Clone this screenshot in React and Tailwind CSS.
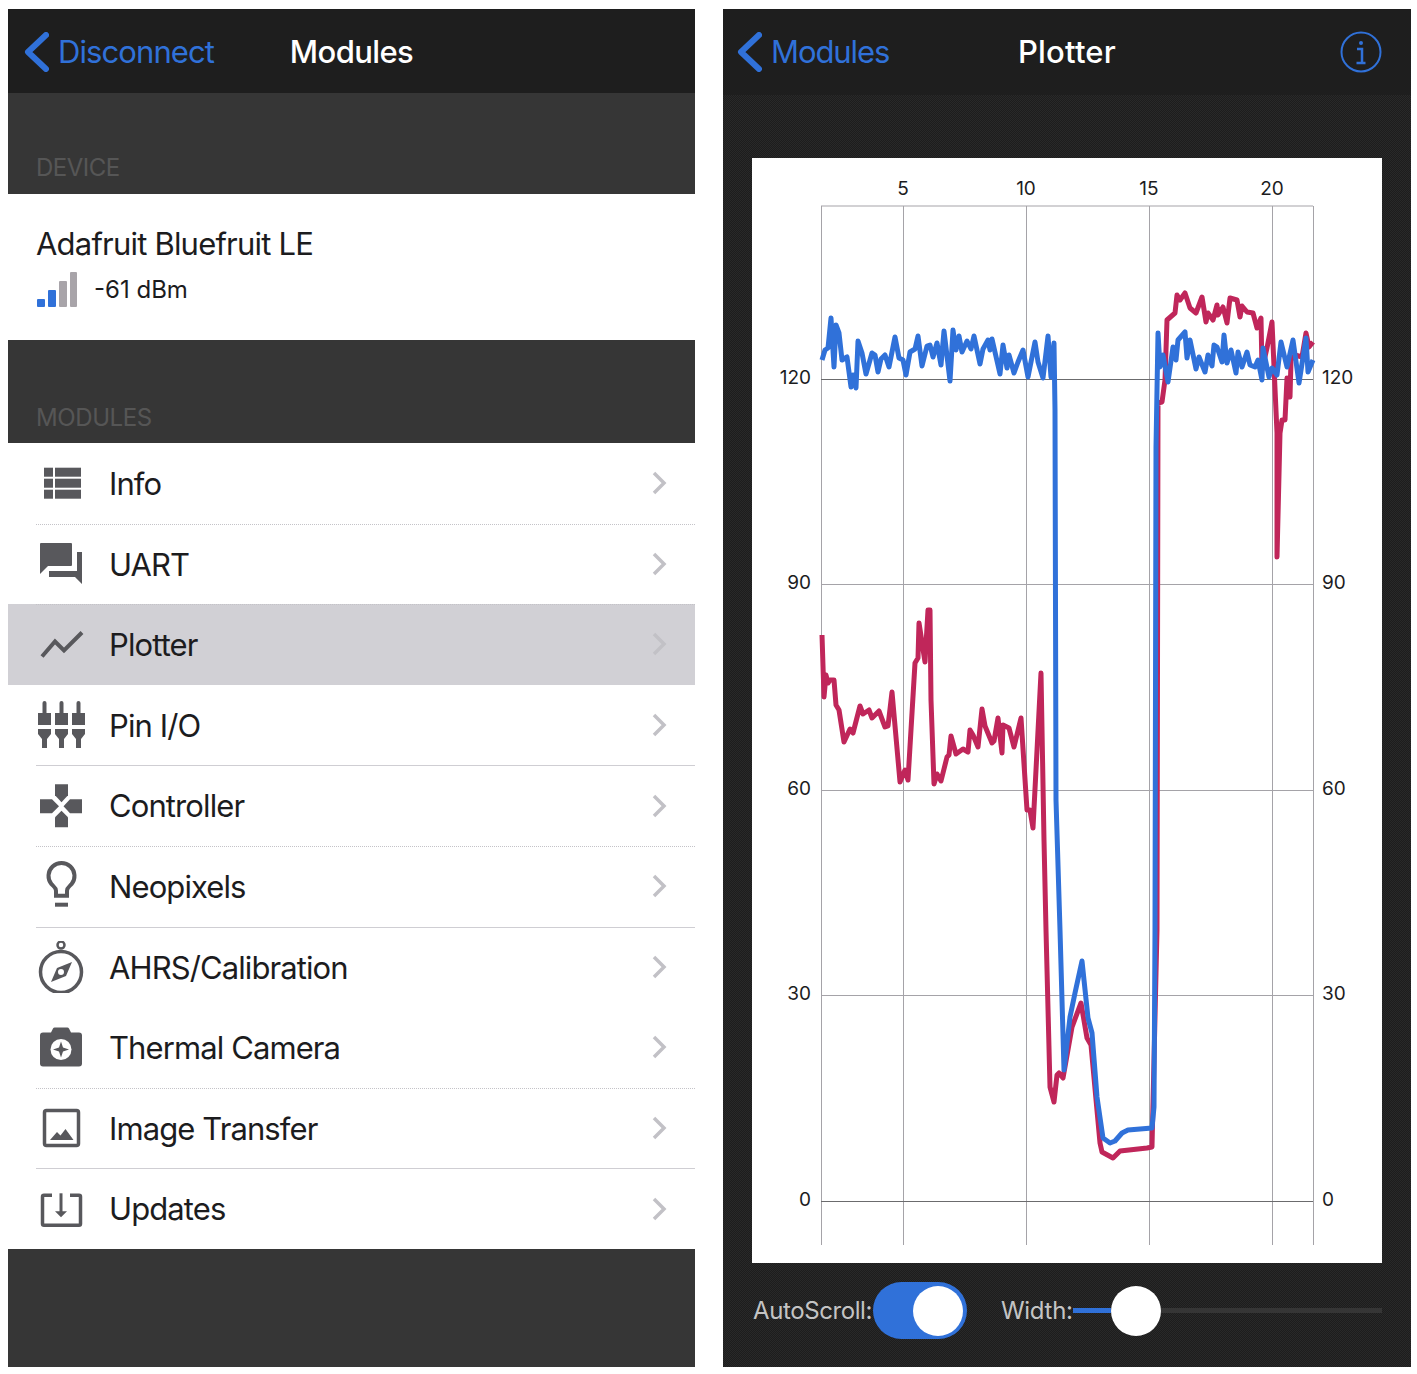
// libs

const BLUE = "#3071d9";
const RED = "#c0265a";

// chart series, in page coordinates (viewBox of the chart matches the page)
const redLine = "822,635 824,697 826,675 828,683 830,680 834,680 836,705 839,710 844,742 850,729 853,733 860,706 863,714 869,710 872,718 879,711 885,727 888,726 892,692 900,782 905,770 908,780 915,663 918,658 919,623 925,662 928,610 930,610 931,700 934,784 937,774 941,781 947,757 949,755 951,736 956,754 963,749 968,752 970,730 973,735 978,747 982,709 985,726 992,743 994,741 998,718 1002,753 1003,725 1009,728 1014,747 1021,718 1027,810 1030,810 1033,828 1041,673 1044,840 1046,930 1050,1087 1054,1102 1057,1075 1059,1073 1063,1078 1072,1027 1081,1003 1087,1038 1091,1045 1100,1143 1102,1152 1113,1158 1120,1151 1147,1148 1152,1147 1157,930 1158,403 1162,402 1165,380 1167,320 1175,313 1177,295 1180,300 1185,293 1190,308 1196,313 1202,297 1206,322 1208,313 1213,320 1217,305 1218,315 1223,307 1227,323 1230,298 1237,300 1240,317 1242,306 1247,312 1253,313 1257,328 1261,318 1262,370 1267,348 1272,322 1277,433 1277,557 1280,433 1282,420 1285,420 1287,378 1290,397 1291,360 1295,355 1302,357 1306,333 1309,347 1313,342";
const blueLine = "822,360 825,350 828,348 831,318 834,367 836,325 839,333 842,360 847,357 851,387 853,375 856,388 858,341 862,353 866,374 872,353 875,355 878,372 881,359 885,355 889,367 895,337 899,358 903,360 906,375 910,352 915,349 918,336 922,366 927,346 930,345 933,357 937,343 941,365 944,331 950,381 953,330 956,350 959,336 962,352 967,341 971,349 974,336 980,364 983,349 988,340 990,350 992,339 1000,374 1003,345 1007,368 1009,355 1014,373 1018,362 1023,350 1028,377 1035,342 1038,362 1043,378 1048,336 1051,377 1054,343 1055,410 1056,800 1060,930 1064,1070 1070,1017 1075,993 1082,961 1088,1018 1092,1033 1097,1097 1103,1138 1110,1143 1115,1141 1122,1133 1128,1130 1152,1128 1154,1107 1155,930 1156,447 1158,333 1160,367 1163,355 1168,382 1173,347 1176,360 1178,340 1185,332 1187,358 1190,340 1196,369 1199,357 1205,372 1208,355 1212,366 1214,345 1217,347 1222,362 1224,335 1227,363 1231,350 1236,373 1238,352 1242,367 1247,352 1250,365 1255,367 1258,360 1262,380 1263,348 1269,377 1272,368 1277,375 1281,342 1287,367 1293,340 1299,383 1306,338 1308,372 1313,360";

const yLabels = [
    { y: 379, label: "120" },
    { y: 584, label: "90" },
    { y: 790, label: "60" },
    { y: 995, label: "30" },
    { y: 1201, label: "0" },
];
const xLabels = [
    { x: 903, label: "5" },
    { x: 1026, label: "10" },
    { x: 1149, label: "15" },
    { x: 1272, label: "20" },
];

// icons: each viewBox is a 52x52 window over the page position of the icon
function InfoIcon() {
    return (
        <svg viewBox="35 457.3 52 52" className="w-[52px] h-[52px]" fill="#58585c">
            <rect x="44" y="468" width="9" height="9" />
            <rect x="55" y="468" width="26" height="9" />
            <rect x="44" y="479" width="9" height="9" />
            <rect x="55" y="479" width="26" height="9" />
            <rect x="44" y="490" width="9" height="9" />
            <rect x="55" y="490" width="26" height="9" />
        </svg>
    );
}
function UartIcon() {
    return (
        <svg viewBox="35 537.9 52 52" className="w-[52px] h-[52px]" fill="#58585c">
            <path d="M41 543h30a1 1 0 0 1 1 1v21a1 1 0 0 1-1 1H48l-8 8V544a1 1 0 0 1 1-1z" />
            <path d="M77 552h5v32l-7-7H49v-6h28z" />
        </svg>
    );
}
function PlotterIcon() {
    return (
        <svg viewBox="35 618.5 52 52" className="w-[52px] h-[52px]" fill="none" stroke="#58585c" strokeWidth="4">
            <polyline points="42,657 55,642 64,651 82,633" />
        </svg>
    );
}
function PinIcon() {
    return (
        <svg viewBox="35 699 52 52" className="w-[52px] h-[52px]" fill="#58585c">
            {[38, 55, 72].map((x) => (
                <g key={x}>
                    <path d={`M${x + 4.5} 703a2 2 0 0 1 4 0v10h4.500v12h-13v-12h4.500z`} />
                    <path d={`M${x} 729h13v5l-4 5v9h-5v-9l-4-5z`} />
                </g>
            ))}
        </svg>
    );
}
function ControllerIcon() {
    return (
        <svg viewBox="35 779.7 52 52" className="w-[52px] h-[52px]" fill="#58585c">
            <path d="M55 784h13v11l-6.500 7-6.500-7z" />
            <path d="M55 827h13v-10l-6.500-6.500-6.500 6.500z" />
            <path d="M40 799h12l7 7-7 7H40z" />
            <path d="M82 799H70l-6.500 7 6.500 7h12z" />
        </svg>
    );
}
function BulbIcon() {
    return (
        <svg viewBox="35 860.3 52 52" className="w-[52px] h-[52px]" fill="none" stroke="#58585c" strokeWidth="4">
            <path d="M56 896v-5c0-3-2-4-4.500-6.500a13 13 0 1 1 20 0C69 887 67 888 67 891v5z" />
            <line x1="55" y1="905" x2="68" y2="905" />
        </svg>
    );
}
function CompassIcon() {
    return (
        <svg viewBox="35 940.900 52 52" className="w-[52px] h-[52px]" fill="none" stroke="#58585c">
            <circle cx="61" cy="972" r="20.500" strokeWidth="3.500" />
            <circle cx="61" cy="945" r="3.500" strokeWidth="2.500" />
            <path fillRule="evenodd" fill="#58585c" stroke="none" d="M72 962l-6 14-15 6 6-14zM61 969a3 3 0 1 0 0 6 3 3 0 0 0 0-6z" />
        </svg>
    );
}
function CameraIcon() {
    return (
        <svg viewBox="35 1021.500 52 52" className="w-[52px] h-[52px]">
            <path fill="#58585c" d="M43 1033h8l2-4a2 2 0 0 1 2-1h12a2 2 0 0 1 2 1l2 4h8a3 3 0 0 1 3 3v28a3 3 0 0 1-3 3H43a3 3 0 0 1-3-3v-28a3 3 0 0 1 3-3z" />
            <circle cx="61" cy="1050" r="10.500" fill="#fff" />
            <path fill="#58585c" d="M61 1042l2 6 6 2-6 2-2 6-2-6-6-2 6-2z" />
        </svg>
    );
}
function ImageIcon() {
    return (
        <svg viewBox="35 1102 52 52" className="w-[52px] h-[52px]">
            <rect x="44.500" y="1110.500" width="34" height="35" rx="2" fill="none" stroke="#58585c" strokeWidth="3.500" />
            <path fill="#58585c" d="M50 1140l7-8 3.500 3.500 5-6.500 8 11z" />
        </svg>
    );
}
function UpdatesIcon() {
    return (
        <svg viewBox="35 1182.700 52 52" className="w-[52px] h-[52px]" fill="none" stroke="#58585c" strokeWidth="3.500">
            <path d="M52 1195H44a1.500 1.500 0 0 0-1.500 1.500v27a1.500 1.500 0 0 0 1.500 1.500h35a1.500 1.500 0 0 0 1.500-1.500v-27a1.500 1.500 0 0 0-1.500-1.500h-9" />
            <line x1="61" y1="1193" x2="61" y2="1212" strokeWidth="3" />
            <path d="M55 1211h12l-6 6z" fill="#58585c" stroke="none" />
        </svg>
    );
}

const modules = [
    { name: "Info", Icon: InfoIcon, divider: "dotted" },
    { name: "UART", Icon: UartIcon, divider: "dotted" },
    { name: "Plotter", Icon: PlotterIcon, active: true },
    { name: "Pin I/O", Icon: PinIcon, divider: "solid" },
    { name: "Controller", Icon: ControllerIcon, divider: "dotted" },
    { name: "Neopixels", Icon: BulbIcon, divider: "solid" },
    { name: "AHRS/Calibration", Icon: CompassIcon },
    { name: "Thermal Camera", Icon: CameraIcon, divider: "dotted" },
    { name: "Image Transfer", Icon: ImageIcon, divider: "solid" },
    { name: "Updates", Icon: UpdatesIcon },
];

function BackLink({ label, className }) {
    return (
        <div className={`flex items-center text-[#3071d9] text-[31px] ${className}`}>
            <svg viewBox="0 0 26 40" className="w-[26px] h-[40px] ml-[15px] mr-[9px]" fill="none" stroke={BLUE} strokeWidth="6" strokeLinecap="round" strokeLinejoin="round">
                <polyline points="23,3 5,20 23,37" />
            </svg>
            <span>{label}</span>
        </div>
    );
}

function ModuleRow({ name, Icon, active, divider }) {
    return (
        <div className={`flex-1 flex items-center pl-[27px] relative ${active ? "bg-[#d1d0d5]" : "bg-white"}`}>
            <Icon />
            <span className="ml-[22px] pt-[2px] flex-1 text-[#1c1c1e] text-[31px] tracking-[-0.9px]">{name}</span>
            <svg viewBox="0 0 16 24" className="w-[16px] h-[24px] mr-[28px]" fill="none" stroke="#c2c1c6" strokeWidth="3.500">
                <polyline points="3,2 13,12 3,22" />
            </svg>
            {divider === "solid" && <div className="absolute z-10 left-[28px] right-0 -bottom-px h-px bg-[#cfced3]"></div>}
            {divider === "dotted" && <div className="absolute z-10 left-[28px] right-0 -bottom-px border-b border-dotted border-[#c4c3c8]"></div>}
        </div>
    );
}

function Chart() {
    return (
        <svg viewBox="752 158 630 1105" className="w-[630px] h-[1105px] bg-white">
            <g stroke="#a5a3a8" strokeWidth="1">
                <line x1="821" y1="206" x2="1313" y2="206" />
                {[821, 903, 1026, 1149, 1272, 1313].map((x) => (
                    <line key={x} x1={x + 0.5} y1="206" x2={x + 0.5} y2="1245" />
                ))}
                {yLabels.map((row) => (
                    <line key={row.y} x1="821" y1={row.y + 0.5} x2="1313" y2={row.y + 0.5} stroke={row.y === 379 || row.y === 1201 ? "#6b6b6d" : "#a5a3a8"} />
                ))}
            </g>
            <polyline points={redLine} fill="none" stroke={RED} strokeWidth="5" strokeLinejoin="round" />
            <polyline points={blueLine} fill="none" stroke={BLUE} strokeWidth="5" strokeLinejoin="round" />
            <g fontSize="19" fill="#1c1c1e" fontFamily="Inter, sans-serif">
                {xLabels.map((item) => (
                    <text key={item.x} x={item.x} y="195" textAnchor="middle">{item.label}</text>
                ))}
                {yLabels.map((row) => (
                    <g key={row.y}>
                        <text x="811" y={row.y + 5} textAnchor="end">{row.label}</text>
                        <text x="1322" y={row.y + 5}>{row.label}</text>
                    </g>
                ))}
            </g>
        </svg>
    );
}

export default function App() {
    return (
        <div className="flex gap-[28px] pt-[9px] pl-[8px] w-[1417px] h-[1374px] bg-white font-['Inter',sans-serif]">
            {/* modules list */}
            <div className="w-[687px] h-[1358px] flex flex-col bg-[#363636]">
                <div className="h-[84px] pt-[2px] grid grid-cols-[1fr_auto_1fr] items-center bg-[#1e1e1e]">
                    <BackLink label="Disconnect" className="tracking-[-0.9px]" />
                    <h1 className="text-white text-[31px] font-medium tracking-[-0.6px]">Modules</h1>
                </div>
                <div className="h-[101px] flex items-end pl-[28px] pb-[8px] text-[#565656] text-[24px] tracking-[-0.5px]">DEVICE</div>
                <div className="h-[146px] bg-white pl-[28px] pt-[30px]">
                    <div className="text-[31px] leading-[40px] text-[#1c1c1e] tracking-[-0.8px]">Adafruit Bluefruit LE</div>
                    <div className="flex items-center mt-[7px] gap-[16px]">
                        <div className="flex items-end gap-[3px] h-[35px] ml-[1px] mr-[1px]">
                            <div className="w-[8px] h-[8px] rounded-[1px] bg-[#3071d9]"></div>
                            <div className="w-[8px] h-[17px] rounded-[1px] bg-[#3071d9]"></div>
                            <div className="w-[8px] h-[26px] rounded-[1px] bg-[#a8a4a9]"></div>
                            <div className="w-[7px] h-[35px] rounded-[1px] bg-[#a8a4a9]"></div>
                        </div>
                        <span className="text-[24px] text-[#1c1c1e] pt-[1px]">-61 dBm</span>
                    </div>
                </div>
                <div className="h-[103px] flex items-end pl-[28px] pb-[7px] text-[#565656] text-[24px] tracking-[-0.4px]">MODULES</div>
                <div className="h-[806px] flex flex-col">
                    {modules.map((item) => (
                        <ModuleRow key={item.name} {...item} />
                    ))}
                </div>
            </div>

            {/* plotter */}
            <div className="w-[688px] h-[1358px] flex flex-col bg-[repeating-conic-gradient(#1d1d1d_0%_25%,#292929_0%_50%)] bg-[length:2px_2px]">
                <div className="h-[86px] shrink-0 grid grid-cols-[1fr_auto_1fr] items-center bg-[#1e1e1e]">
                    <BackLink label="Modules" className="tracking-[-1.1px] -ml-[2px]" />
                    <h1 className="text-white text-[31px] font-medium tracking-[0.2px]">Plotter</h1>
                    <div className="flex justify-end pr-[29px]">
                        <svg viewBox="0 0 42 42" className="w-[42px] h-[42px]" fill="none" stroke={BLUE} strokeWidth="2">
                            <circle cx="21" cy="21" r="19.500" />
                            <circle cx="21" cy="12" r="2" fill={BLUE} stroke="none" />
                            <path d="M17 18h5v14M16.500 32h9" strokeWidth="2.500" />
                        </svg>
                    </div>
                </div>
                <div className="mt-[63px] ml-[29px]">
                    <Chart />
                </div>
                <div className="mt-[19px] ml-[30px] mr-[29px] h-[57px] flex items-center">
                    <span className="text-[24px] text-[#c4c4c4] w-[120px] tracking-[-0.4px]">AutoScroll:</span>
                    <div className="w-[94px] h-[57px] rounded-full bg-[#3071d9] flex items-center justify-end pr-[4px]">
                        <div className="w-[50px] h-[50px] rounded-full bg-white"></div>
                    </div>
                    <span className="ml-[34px] text-[24px] text-[#c4c4c4] w-[72px] tracking-[-0.3px]">Width:</span>
                    <div className="w-[38px] h-[5px] bg-[#3071d9]"></div>
                    <div className="w-[50px] h-[50px] rounded-full bg-white shrink-0"></div>
                    <div className="flex-1 h-[5px] bg-[#363636]"></div>
                </div>
            </div>
        </div>
    );
}
